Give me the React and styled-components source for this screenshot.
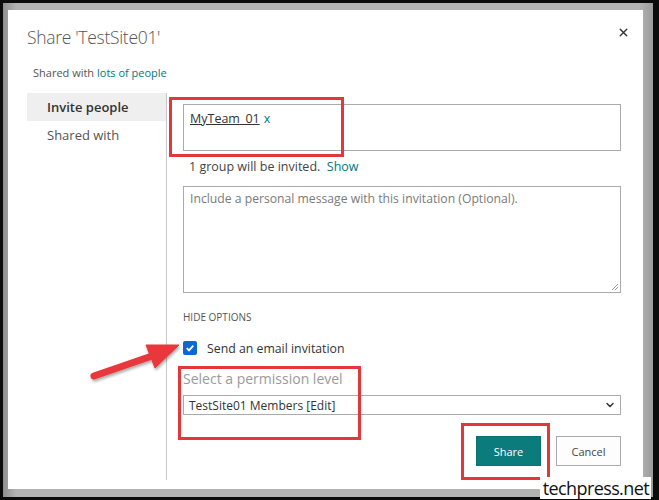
import React from "react";
import styled, { createGlobalStyle } from "styled-components";
import { X, ChevronDown } from "lucide-react";

const GlobalStyle = createGlobalStyle`
  html, body {
    margin: 0;
    padding: 0;
    background: #000;
  }
  body {
    font-family: "Open Sans", "Segoe UI", sans-serif;
    color: #333;
  }
  * {
    box-sizing: border-box;
  }
`;

const Frame = styled.div`
  position: relative;
  width: 659px;
  height: 500px;
  background: #0b0b0b;
  padding: 3px 6px 3px 3px;
`;

const Shadow = styled.div`
  height: 100%;
  background: linear-gradient(90deg, #8f8f8f, #b3b3b3 2%, #b3b3b3 98%, #9b9b9b);
  padding: 7px 10px 8px 5px;
`;

const Dialog = styled.div`
  height: 100%;
  background: #fff;
  display: flex;
  flex-direction: column;
`;

const Header = styled.div`
  display: flex;
  justify-content: space-between;
  align-items: flex-start;
  padding: 14px 13px 0 19px;
`;

const Title = styled.h1`
  margin: 0;
  font-size: 17.5px;
  line-height: 27px;
  font-weight: 300;
  letter-spacing: -0.3px;
  color: #555;
`;

const CloseButton = styled.button`
  border: 0;
  background: none;
  padding: 0;
  margin-top: 2px;
  color: #333;
  display: flex;
`;

const SharedLine = styled.div`
  margin: 14px 0 0 25px;
  font-size: 11px;
  line-height: 16px;
  color: #555;
`;

const Link = styled.a`
  color: #03787c;
  text-decoration: none;
`;

const Body = styled.div`
  display: flex;
  margin: 12px 0 0 19px;
`;

const Nav = styled.nav`
  width: 139px;
  display: flex;
  flex-direction: column;
`;

const NavItem = styled.div`
  height: 28px;
  line-height: 29px;
  padding-left: 20px;
  font-size: 13px;
  color: ${(p) => (p.$active ? "#333" : "#555")};
  font-weight: ${(p) => (p.$active ? 600 : 400)};
  background: ${(p) => (p.$active ? "#efefef" : "transparent")};
`;

const Content = styled.div`
  flex: 1;
  border-left: 1px solid #c8c8c8;
  padding: 11px 22px 14px 16px;
  display: flex;
  flex-direction: column;
`;

const Annotated = styled.div`
  position: relative;
  margin-top: ${(p) => p.$mt || 0}px;
`;

const RedBox = styled.div`
  position: absolute;
  left: ${(p) => p.$left}px;
  top: ${(p) => p.$top}px;
  width: ${(p) => p.$w}px;
  height: ${(p) => p.$h}px;
  border: 3px solid #e3373c;
  pointer-events: none;
`;

const PeopleInput = styled.div`
  height: 47px;
  border: 1px solid #ababab;
  padding: 5px 6px;
  font-size: 12.5px;
  line-height: 18px;
`;

const Token = styled.span`
  color: #333;
  text-decoration: underline;
`;

const TokenRemove = styled.span`
  color: #03787c;
  margin-left: 4px;
`;

const InviteNote = styled.div`
  margin: 7px 0 0 6px;
  font-size: 12.5px;
  line-height: 18px;
  color: #444;
`;

const MessageBox = styled.div`
  position: relative;
  margin-top: 10px;
  height: 107px;
  border: 1px solid #ababab;
  padding: 3px 6px;
  font-size: 12.2px;
  line-height: 18px;
  color: #7a7a7a;
`;

const Grip = styled.svg`
  position: absolute;
  right: 1px;
  bottom: 1px;
`;

const OptionsToggle = styled.div`
  margin-top: 17px;
  font-size: 10px;
  line-height: 14px;
  color: #555;
  text-transform: uppercase;
`;

const CheckRow = styled.label`
  margin-top: 15px;
  display: flex;
  align-items: center;
  gap: 10px;
  height: 18px;
  font-size: 12.3px;
  color: #333;
`;

const Checkbox = styled.span`
  width: 14px;
  height: 14px;
  border-radius: 2px;
  background: #0d67d4;
  display: flex;
  align-items: center;
  justify-content: center;
`;

const PermissionLabel = styled.div`
  font-size: 14px;
  line-height: 18px;
  color: #9a9a9a;
`;

const Select = styled.div`
  margin-top: 7px;
  height: 20px;
  border: 1px solid #ababab;
  display: flex;
  align-items: center;
  justify-content: space-between;
  padding: 0 4px 0 5px;
  font-size: 12px;
  color: #333;
`;

const ButtonRow = styled.div`
  margin-top: 21px;
  display: flex;
  justify-content: flex-end;
  gap: 15px;
`;

const Button = styled.button`
  width: 65px;
  height: 30px;
  font-family: inherit;
  font-size: 11px;
  border: 1px solid ${(p) => (p.$primary ? "#0a7273" : "#ababab")};
  background: ${(p) => (p.$primary ? "#0b7b7b" : "#fdfdfd")};
  color: ${(p) => (p.$primary ? "#fff" : "#444")};
  padding: 0;
`;

const Overlay = styled.svg`
  position: absolute;
  left: 0;
  top: 0;
  pointer-events: none;
`;

const Watermark = styled.div`
  position: absolute;
  right: 8px;
  bottom: 1px;
  background: #fff;
  padding: 0 2px 0 3px;
  font-family: "Open Sans", sans-serif;
  font-size: 18px;
  letter-spacing: -0.6px;
  line-height: 22px;
  color: #111;
`;

export default function App() {
  return (
    <>
      <GlobalStyle />
      <Frame>
        <Shadow>
          <Dialog>
            <Header>
              <Title>Share 'TestSite01'</Title>
              <CloseButton aria-label="Close">
                <X size={13} strokeWidth={2.6} />
              </CloseButton>
            </Header>
            <SharedLine>
              Shared with <Link>lots of people</Link>
            </SharedLine>
            <Body>
              <Nav>
                <NavItem $active>Invite people</NavItem>
                <NavItem>Shared with</NavItem>
              </Nav>
              <Content>
                <Annotated>
                  <PeopleInput>
                    <Token>MyTeam_01</Token>
                    <TokenRemove>x</TokenRemove>
                  </PeopleInput>
                  <RedBox $left={-14} $top={-7} $w={175} $h={60} />
                </Annotated>
                <InviteNote>
                  1 group will be invited.&nbsp; <Link>Show</Link>
                </InviteNote>
                <MessageBox>
                  Include a personal message with this invitation (Optional).
                  <Grip width="8" height="8" viewBox="0 0 8 8">
                    <path d="M7 1 L1 7 M7 4 L4 7" stroke="#999" strokeWidth="1" />
                  </Grip>
                </MessageBox>
                <OptionsToggle>Hide options</OptionsToggle>
                <CheckRow>
                  <Checkbox>
                    <svg width="10" height="10" viewBox="0 0 10 10">
                      <path
                        d="M1.8 5.2 L4 7.4 L8.3 2.6"
                        fill="none"
                        stroke="#fff"
                        strokeWidth="1.8"
                      />
                    </svg>
                  </Checkbox>
                  Send an email invitation
                </CheckRow>
                <Annotated $mt={13}>
                  <PermissionLabel>Select a permission level</PermissionLabel>
                  <Select>
                    TestSite01 Members [Edit]
                    <ChevronDown size={12} strokeWidth={3} color="#333" />
                  </Select>
                  <RedBox $left={-5} $top={-4} $w={183} $h={74} />
                </Annotated>
                <ButtonRow>
                  <Annotated>
                    <Button $primary>Share</Button>
                    <RedBox $left={-15} $top={-13} $w={89} $h={57} />
                  </Annotated>
                  <Button>Cancel</Button>
                </ButtonRow>
              </Content>
            </Body>
          </Dialog>
        </Shadow>
        <Overlay width="659" height="500" viewBox="0 0 659 500">
          <defs>
            <filter id="arrowShadow" x="-20%" y="-40%" width="140%" height="180%">
              <feDropShadow dx="1" dy="2" stdDeviation="1.5" floodColor="#000" floodOpacity="0.35" />
            </filter>
          </defs>
          <g filter="url(#arrowShadow)" fill="#e8383a" stroke="#e8383a">
            <line x1="94" y1="376" x2="152" y2="356" strokeWidth="7" strokeLinecap="round" />
            <polygon points="146,345 179,345 155,368" strokeWidth="1" strokeLinejoin="round" />
          </g>
        </Overlay>
        <Watermark>techpress.net</Watermark>
      </Frame>
    </>
  );
}
